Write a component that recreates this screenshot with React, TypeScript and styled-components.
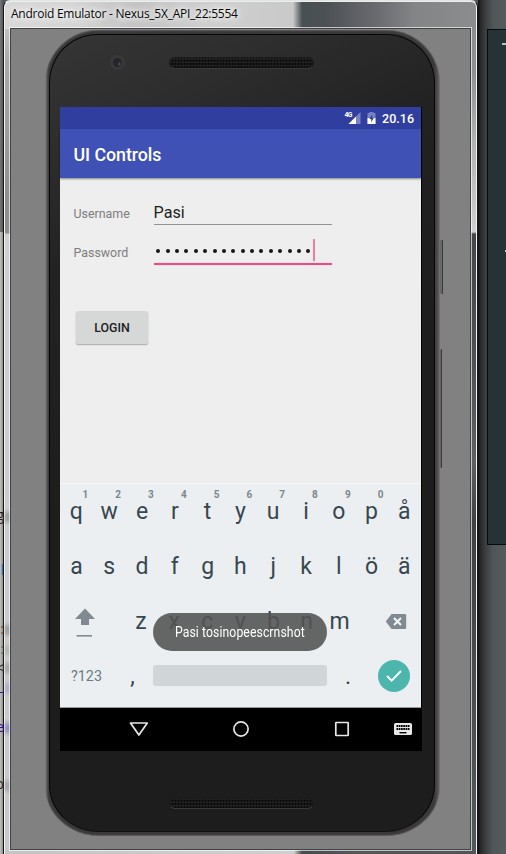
import React from "react";
import styled, { createGlobalStyle } from "styled-components";

const GlobalStyle = createGlobalStyle`
  * { box-sizing: border-box; }
  body { margin: 0; overflow: hidden; font-family: Roboto, "Liberation Sans", sans-serif; }
`;

const Desktop = styled.main`
  display: grid;
  grid-template-columns: 3px 475px 28px;
  width: 506px;
  height: 854px;
  overflow: hidden;
  background: #50565a;
`;

const LeftStrip = styled.aside`
  position: relative;
  overflow: hidden;
  background: linear-gradient(90deg, #777 0, #555 100%) top / 100% 232px no-repeat,
    linear-gradient(90deg, #c4c4c2, #8d8d8a);
`;

const Fragment = styled.span<{ $y: number; $color: string }>`
  position: absolute;
  top: ${(p) => p.$y}px;
  right: -1px;
  font: 14px/18px "Open Sans", sans-serif;
  color: ${(p) => p.$color};
`;

const Window = styled.section`
  position: relative;
  display: grid;
  grid-template-rows: 26px 822px 4px;
  padding: 1px 6px 1px 6px;
  border: 1px solid #151515;
  border-top: 1px solid #dfe5e3;
  border-bottom: 0;
  border-radius: 7px 7px 0 0;
  box-shadow: inset 1px 0 #f5f5f5, inset -1px 0 #f5f5f5, inset 0 1px #eee;
  background:
    linear-gradient(90deg, #d8d8d8 0, #d5d5d5 70px, #c3c3c3 130px, #cfcfcf 210px, #c9c9c9 289px, #485053 298px, #4b5054 320px, #68696d 370px, #838486 410px, #8b8d8f 475px) top / 100% 28px no-repeat,
    linear-gradient(90deg, #c4c4c4 0, #cfcfcf 290px, #454b50 298px, #55575b 350px, #505357 475px) bottom / 100% 5px no-repeat,
    linear-gradient(#d4d4d4 0, #aaa 60px, #8f8f8f 200px, #8f8f8f 232px, #cfcfcf 233px, #c8c8c8 100%) left / 7px 100% no-repeat,
    linear-gradient(#8b8d8f 0, #8e9092 70px, #b5b5b5 150px, #d0cece 231px, #454649 233px, #505154 360px, #5e6062 460px, #404143 520px, #55585a 100%) right / 7px 100% no-repeat;
`;

const TitleBar = styled.header`
  display: flex;
  align-items: center;
  padding: 0 0 2px 1px;
`;

const Title = styled.h1`
  margin: 0;
  font: 400 12px/16px "Open Sans", "Noto Sans", sans-serif;
  letter-spacing: -0.25px;
  white-space: nowrap;
  color: #080808;
  text-shadow: 0 0 5px #fff, 0 0 9px #fff, 0 0 14px #fff;
`;

const Smudge = styled.i<{ $y: number; $color: string }>`
  position: absolute;
  left: 1px;
  top: ${(p) => p.$y}px;
  width: 6px;
  height: 10px;
  background: ${(p) => p.$color};
  filter: blur(2px);
  opacity: 0.65;
`;

const Canvas = styled.div`
  position: relative;
  width: 461px;
  padding: 1px 0 0 34px;
  border: 1px solid #404344;
  outline: 1px solid rgba(255, 255, 255, 0.65);
  background: #818181;
`;

const SideButton = styled.i<{ $y: number; $h: number; $w: number }>`
  position: absolute;
  left: 428px;
  top: ${(p) => p.$y}px;
  width: ${(p) => p.$w}px;
  height: ${(p) => p.$h}px;
  background: #6a676a;
  border-right: 1px solid #3a393a;
  border-radius: 0 1px 1px 0;
`;

const Phone = styled.section`
  position: relative;
  width: 395px;
  height: 806px;
  padding: 4px 5px 5px 4px;
  border-radius: 53px 53px 54px 54px / 53px 53px 50px 50px;
  background: linear-gradient(90deg, #8a8a8a 0, #555354 2px, #3a3839 4px, #3a3839 389px, #4c494a 392px, #696768 395px);
  box-shadow: inset 0 0 1.5px 0.5px #777576;
`;

const Bezel = styled.div`
  display: grid;
  grid-template-rows: 72px 644px 80px;
  height: 798px;
  padding-left: 10px;
  border: 1px solid #060606;
  border-bottom-color: #101010;
  border-radius: 48px 48px 50px 50px / 49px 49px 47px 47px;
  background: linear-gradient(155deg, #353535 0, #2d2d2d 12%, #222 25%, #1d1d1d 50%, #1d1d1d 100%);
`;

const EarRow = styled.div`
  display: grid;
  grid-template-columns: 16px 145px;
  column-gap: 43px;
  align-items: center;
  align-content: start;
  padding: 20px 0 0 50px;
`;

const Camera = styled.i`
  width: 15px;
  height: 15px;
  border-radius: 50%;
  background: radial-gradient(circle at 64% 60%, #8d626b 0, #39323d 1px, transparent 3px),
    radial-gradient(circle, #24242a 0 4px, #383838 5px 7px);
`;

const Grille = styled.i`
  display: block;
  width: 145px;
  height: 12px;
  border-radius: 6px;
  border: 1px solid #1b1b1b;
  border-bottom-color: #3a3a3a;
  background: radial-gradient(circle, #070707 0 0.8px, #222 1.4px) 1px 1px / 3px 3.3px;
`;

const ChinRow = styled.div`
  padding: 46px 0 0 109px;
`;

const Screen = styled.div`
  position: relative;
  display: grid;
  grid-template-rows: 22px 49px 305px 225px 43px;
  width: 361px;
  height: 644px;
  background: #eee;
  box-shadow: 1px 0 #000;
`;

const StatusBar = styled.div`
  display: flex;
  align-items: center;
  justify-content: flex-end;
  gap: 6px;
  padding-right: 7px;
  background: #303f9f;
  color: #fff;
`;

const Clock = styled.time`
  font-size: 12.5px;
  font-weight: 500;
`;

const AppBar = styled.header`
  position: relative;
  display: flex;
  align-items: center;
  padding: 1px 0 0 13.5px;
  background: #3f51b5;
  box-shadow: 0 1px 2px rgba(0, 0, 0, 0.45);
  color: #fff;
  font-size: 17.8px;
  font-weight: 500;
  letter-spacing: -0.05px;
`;

const Form = styled.form`
  display: grid;
  grid-template-columns: 80px 178px;
  grid-template-rows: 29px 40px;
  align-content: start;
  padding: 18px 0 0 13.5px;
`;

const Label = styled.label<{ $top: number }>`
  padding-top: ${(p) => p.$top}px;
  font-size: 12.4px;
  line-height: 16px;
  color: #7d7d7d;
`;

const Field = styled.div<{ $active?: boolean }>`
  display: flex;
  align-items: center;
  padding-top: ${(p) => (p.$active ? 12 : 4)}px;
  border-bottom: ${(p) => (p.$active ? "2px solid #ff4081" : "1px solid #929292")};
  font-size: 16.2px;
  color: #222;
`;

const Dots = styled.span`
  display: grid;
  grid-template-columns: repeat(17, 9.4px);
  justify-items: center;
  height: 4px;
  margin-top: 2px;
  i { width: 4px; height: 4px; border-radius: 50%; background: #161616; }
`;

const Cursor = styled.i`
  width: 2px;
  height: 22px;
  background: #f279a1;
`;

const Login = styled.button`
  grid-column: 1 / -1;
  width: 72px;
  height: 33px;
  margin: 46px 0 0 2.5px;
  padding: 1px 0 0;
  border: 0;
  border-radius: 2px;
  background: #d6d8d7;
  box-shadow: 0 1px 1.5px rgba(0, 0, 0, 0.3);
  font: 500 12.4px/16px Roboto, sans-serif;
  color: #222;
`;

const Keyboard = styled.section`
  display: grid;
  grid-template-rows: repeat(4, 55px);
  border-top: 1px solid #f6f8f9;
  border-bottom: 1px solid #9a9c9d;
  background: #ebeff2;
  color: #37474f;
`;

const KeyRow = styled.div`
  display: grid;
  grid-template-columns: repeat(11, 32.8px);
`;

const ShiftRow = styled.div`
  display: grid;
  grid-template-columns: 64.5px 232px 64.5px;
`;

const LetterBlock = styled.div`
  display: grid;
  grid-template-columns: repeat(7, 33.1px);
`;

const Key = styled.div`
  position: relative;
  display: flex;
  align-items: center;
  justify-content: center;
  padding-bottom: 1px;
  font-size: 23px;
`;

const Hint = styled.sup`
  position: absolute;
  top: 4px;
  left: 22.5px;
  font-size: 10px;
  line-height: 14px;
  font-weight: 700;
  color: #7b878c;
`;

const IconCell = styled.div<{ $left?: number; $right?: number }>`
  display: flex;
  align-items: center;
  justify-content: center;
  padding-left: ${(p) => p.$left ?? 0}px;
  padding-right: ${(p) => p.$right ?? 0}px;
`;

const BottomRow = styled.div`
  display: grid;
  grid-template-columns: 53px 40px 174px 43px 51px;
  align-items: center;
  padding-bottom: 1px;
`;

const ModeKey = styled.span`
  text-align: center;
  font-size: 14.3px;
  color: #6d7a80;
`;

const Punctuation = styled.span`
  padding-right: 1px;
  text-align: center;
  font-size: 23px;
`;

const Space = styled.i`
  height: 21px;
  margin-bottom: 1px;
  border-radius: 3px;
  background: #d0d5d8;
`;

const Enter = styled.span`
  display: grid;
  place-items: center;
  width: 32px;
  height: 32px;
  margin-left: 7.5px;
  border-radius: 50%;
  background: #4db6ac;
`;

const NavBar = styled.nav`
  display: grid;
  grid-template-columns: 158px 45px 158px;
  align-items: center;
  padding-bottom: 2px;
  background: #000;
`;

const NavEnd = styled.div`
  display: flex;
  align-items: center;
  justify-content: space-between;
  padding: 0 9px 0 71px;
`;

const NavBack = styled.div`
  display: flex;
  padding-left: 68.5px;
`;

const Toast = styled.div`
  position: absolute;
  left: 93px;
  top: 506px;
  display: flex;
  align-items: center;
  justify-content: center;
  width: 174px;
  height: 38px;
  border-radius: 19px;
  background: rgba(83, 83, 83, 0.89);
  color: #fff;
`;

const ToastText = styled.span`
  font-size: 14.3px;
  letter-spacing: 0.1px;
  white-space: nowrap;
  transform: scaleX(0.855);
`;

const RightBackdrop = styled.aside`
  padding: 29px 0 0 9px;
  background: linear-gradient(90deg, #111 0, #292b2d 3px, #3d4042 8px, #505558 15px, #555a5d);
`;

const EditorPanel = styled.div`
  height: 516px;
  padding: 13px 0 0 14px;
  border: 1px solid #050a0c;
  border-right: 0;
  background: #263238;
`;

const Mark = styled.i<{ $gap?: number; $w: number }>`
  display: block;
  width: ${(p) => p.$w}px;
  height: 2px;
  margin-top: ${(p) => p.$gap ?? 0}px;
  margin-left: auto;
  background: #b9c0c3;
`;

const hints = "1234567890";

const NavIcon = ({ children, w = 18 }: { children: React.ReactNode; w?: number }) => (
  <svg width={w} height="18" viewBox={`0 0 ${w} 18`} fill="none" stroke="#e8e8e8" strokeWidth="1.7">
    {children}
  </svg>
);

const SignalIcon = () => (
  <svg width="17" height="14" viewBox="0 0 17 14">
    <path d="M16.500 1v12H4.500z" fill="#7a84c2" />
    <path d="M12 5.500V13H4.500z" fill="#fff" />
    <text x="0.500" y="6.300" fontFamily="Roboto" fontSize="6.800" fontWeight="700" fill="#fff" textLength="8">4G</text>
  </svg>
);

const BatteryIcon = () => (
  <svg width="9" height="14" viewBox="0 0 9 14">
    <path d="M2.500 1h4v1H8.500v11H.5V2h2z" fill="#7a84c2" />
    <path d="M.5 7h8v6H.5z" fill="#fff" />
    <path d="M5.200 3.500 2.300 8h1.900v3.200L6.900 6.800H5.200z" fill="#303f9f" />
  </svg>
);

export default function App() {
  return (
    <>
      <GlobalStyle />
      <Desktop>
        <LeftStrip>
          <Fragment $y={506} $color="#222">g</Fragment>
          <Fragment $y={561} $color="#1579c0">l</Fragment>
          <Fragment $y={620} $color="#8a4a16">:</Fragment>
          <Fragment $y={640} $color="#557755">:</Fragment>
          <Fragment $y={659} $color="#222">&lt;</Fragment>
          <Fragment $y={677} $color="#2020a0">_</Fragment>
          <Fragment $y={718} $color="#351395">e</Fragment>
          <Fragment $y={775} $color="#222">o</Fragment>
        </LeftStrip>
        <Window>
          <Smudge $y={511} $color="#777" />
          <Smudge $y={624} $color="#777" />
          <Smudge $y={644} $color="#9aa89f" />
          <Smudge $y={662} $color="#888" />
          <Smudge $y={682} $color="#9b97c4" />
          <Smudge $y={722} $color="#6a5cb8" />
          <Smudge $y={780} $color="#888" />
          <TitleBar>
            <Title>Android Emulator - Nexus_5X_API_22:5554</Title>
          </TitleBar>
          <Canvas>
            <SideButton $y={211} $h={54} $w={4} />
            <SideButton $y={320} $h={119} $w={3} />
            <Phone>
              <Bezel>
                <EarRow>
                  <Camera />
                  <Grille />
                </EarRow>
                <Screen>
                  <StatusBar>
                    <SignalIcon />
                    <BatteryIcon />
                    <Clock>20.16</Clock>
                  </StatusBar>
                  <AppBar>UI Controls</AppBar>
                  <Form>
                    <Label $top={9.5}>Username</Label>
                    <Field>Pasi</Field>
                    <Label $top={20}>Password</Label>
                    <Field $active>
                      <Dots>{Array.from({ length: 17 }, (_, i) => <i key={i} />)}</Dots>
                      <Cursor />
                    </Field>
                    <Login type="button">LOGIN</Login>
                  </Form>
                  <Keyboard>
                    <KeyRow>
                      {[..."qwertyuiopå"].map((c, i) => (
                        <Key key={c}>{c}{hints[i] && <Hint>{hints[i]}</Hint>}</Key>
                      ))}
                    </KeyRow>
                    <KeyRow>{[..."asdfghjklöä"].map((c) => <Key key={c}>{c}</Key>)}</KeyRow>
                    <ShiftRow>
                      <IconCell $right={14.5}>
                        <svg width="22" height="30" viewBox="0 0 22 30" fill="#7f8b90">
                          <path d="M11 1.500 21 12H15V18H7V12H1z" />
                          <path d="M2.500 28h15.500v1.600H2.500z" />
                        </svg>
                      </IconCell>
                      <LetterBlock>{[..."zxcvbnm"].map((c) => <Key key={c}>{c}</Key>)}</LetterBlock>
                      <IconCell $left={13.5}>
                        <svg width="22" height="18" viewBox="0 0 22 18">
                          <path d="M6.500 1H20q1.200 0 1.200 1.200v12.600Q21.200 16 20 16H6.500L.8 8.500z" fill="#7f8b90" />
                          <path d="m9 5 7 7m0-7-7 7" stroke="#f3f6f7" strokeWidth="2" />
                        </svg>
                      </IconCell>
                    </ShiftRow>
                    <BottomRow>
                      <ModeKey>?123</ModeKey>
                      <Punctuation>,</Punctuation>
                      <Space />
                      <Punctuation>.</Punctuation>
                      <Enter>
                        <svg width="18" height="14" viewBox="0 0 18 14">
                          <path d="m2 7 4.600 4.700L16 2" fill="none" stroke="#fff" strokeWidth="1.900" />
                        </svg>
                      </Enter>
                    </BottomRow>
                  </Keyboard>
                  <NavBar>
                    <NavBack>
                      <NavIcon w={20}><path d="M1.500 3h16.800L9.900 15z" strokeLinejoin="round" /></NavIcon>
                    </NavBack>
                    <IconCell><NavIcon><circle cx="9" cy="9" r="7.100" /></NavIcon></IconCell>
                    <NavEnd>
                      <NavIcon w={16}><rect x="1.800" y="2.500" width="12.400" height="13" rx=".6" /></NavIcon>
                      <svg width="18" height="14" viewBox="0 0 18 14">
                        <rect y="1" width="18" height="12" rx="1.500" fill="#e8e8e8" />
                        <path d="M2.500 4h13M2.500 7h13" stroke="#000" strokeWidth="1.800" strokeDasharray="1.700 .560" />
                        <path d="M5.500 10.700h7" stroke="#000" strokeWidth="1.400" />
                      </svg>
                    </NavEnd>
                  </NavBar>
                  <Toast><ToastText>Pasi tosinopeescrnshot</ToastText></Toast>
                </Screen>
                <ChinRow><Grille /></ChinRow>
              </Bezel>
            </Phone>
          </Canvas>
        </Window>
        <RightBackdrop>
          <EditorPanel>
            <Mark $w={4} />
            <Mark $w={1} $gap={205} />
          </EditorPanel>
        </RightBackdrop>
      </Desktop>
    </>
  );
}
